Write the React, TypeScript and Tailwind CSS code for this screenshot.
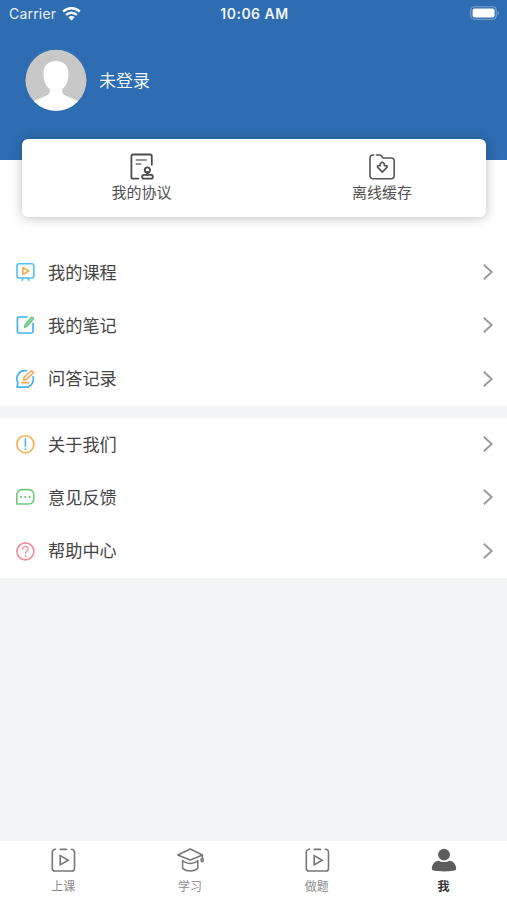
import type { ReactNode } from 'react';

type Item = { label: string; icon: ReactNode };

const CourseIcon = () => (
    <svg width="20" height="20" viewBox="0 0 20 20" fill="none" strokeWidth="1.6" strokeLinecap="round" strokeLinejoin="round">
        <rect x="2" y="1.8" width="16.8" height="14.2" rx="2.2" stroke="#56bdf0" />
        <path d="M8 16.2l-.8 2M13 16.2l.8 2" stroke="#56bdf0" />
        <path d="M7.9 5.6v6.8l5.9-3.4Z" stroke="#f5a94a" />
    </svg>
);

const NoteIcon = () => (
    <svg width="20" height="20" viewBox="0 0 20 20" fill="none" strokeLinecap="round" strokeLinejoin="round">
        <path d="M12.4 2H4a1.6 1.6 0 0 0-1.6 1.6v12.8A1.6 1.6 0 0 0 4 18h12.4a1.6 1.6 0 0 0 1.6-1.6V8.4" stroke="#40b4ec" strokeWidth="1.7" />
        <path d="m9.4 12.6.6-2.8 6.3-7.4q1.800-.4 2.200 1.400l-6.500 7.400Z" stroke="#68c781" strokeWidth="1.4" fill="#9bdca9" />
    </svg>
);

const AnswerIcon = () => (
    <svg width="20" height="20" viewBox="0 0 20 20" fill="none" strokeLinecap="round" strokeLinejoin="round">
        <path d="M11.6 1.9A8 8 0 0 0 3 13.8L2 18.2h8.5A8 8 0 0 0 18 7.8" stroke="#45b5ef" strokeWidth="1.7" />
        <path d="m8.6 10.900.8-2.900 7-6.300 2.200 1.800-7 6.700Z" stroke="#f3a44b" strokeWidth="1.5" />
        <path d="M6.8 13.6h7" stroke="#f3a44b" strokeWidth="1.6" />
    </svg>
);

const AboutIcon = () => (
    <svg width="20" height="20" viewBox="0 0 20 20" fill="none" strokeLinecap="round">
        <circle cx="10.4" cy="10.2" r="8.5" stroke="#f4ae50" strokeWidth="1.6" />
        <path d="M10.4 5v7.4" stroke="#45b5ef" strokeWidth="1.5" />
        <circle cx="10.4" cy="15.2" r=".9" fill="#45b5ef" />
    </svg>
);

const FeedbackIcon = () => (
    <svg width="20" height="20" viewBox="0 0 20 20" fill="none">
        <path d="M1.8 17V7.6a5 5 0 0 1 5-5h7a5 5 0 0 1 5 5V12a5 5 0 0 1-5 5Z" stroke="#6fca7d" strokeWidth="1.6" strokeLinejoin="round" />
        <g fill="#6fca7d">
            <circle cx="6" cy="9.9" r="1.1" />
            <circle cx="10.3" cy="9.9" r="1.1" />
            <circle cx="14.6" cy="9.9" r="1.1" />
        </g>
    </svg>
);

const HelpIcon = () => (
    <svg width="20" height="20" viewBox="0 0 20 20" fill="none" stroke="#f28ba2" strokeLinecap="round" strokeLinejoin="round">
        <circle cx="10.4" cy="10.4" r="8.5" strokeWidth="1.6" />
        <path d="M7.7 8.2A2.7 2.7 0 1 1 12 10.2C10.9 11 10.4 11.4 10.4 12.5" strokeWidth="1.3" />
        <circle cx="10.4" cy="15" r=".4" fill="#f28ba2" strokeWidth="1" />
    </svg>
);

const AgreementIcon = () => (
    <svg width="26" height="28" viewBox="0 0 26 28" fill="none" stroke="#4c4c4c" strokeWidth="1.8" strokeLinecap="round" strokeLinejoin="round">
        <path d="M9.4 25.600H4.100A1.700 1.700 0 0 1 2.400 23.900V3.200A1.700 1.700 0 0 1 4.100 1.500h17a1.700 1.700 0 0 1 1.700 1.700v8.600" />
        <path d="M7.200 7h10.200M7.200 11h4.600" strokeWidth="1.300" stroke="#777" />
        <circle cx="18.400" cy="16.900" r="2.600" />
        <path d="M18.400 19.500v2.100" strokeWidth="2.300" />
        <rect x="13.200" y="21.800" width="10.600" height="3.800" rx="1.700" />
    </svg>
);

const CacheIcon = () => (
    <svg width="28" height="28" viewBox="0 0 28 28" fill="none" stroke="#555" strokeWidth="1.6" strokeLinecap="round" strokeLinejoin="round">
        <path d="M8.5 2h3.200a2 2 0 0 1 1.600.8L15 5h8.200a3 3 0 0 1 3 3v14.700a3 3 0 0 1-3 3H5a3 3 0 0 1-3-3V5a3 3 0 0 1 3-3h.700" />
        <path d="M12.300 12.800v-2.200l2-1.500 2 1.500v2.200h2.800v1.300l-4.800 5-4.800-5v-1.300Z" />
    </svg>
);

const PlayTabIcon = () => (
    <svg width="26" height="26" viewBox="0 0 26 26" fill="none" stroke="#777" strokeWidth="1.6" strokeLinecap="round" strokeLinejoin="round">
        <path d="M5.4 2.200A3 3 0 0 0 2.300 5.200v16.200a2.600 2.600 0 0 0 2.600 2.600h17a2.600 2.600 0 0 0 2.600-2.600V5.200a3 3 0 0 0-3.100-3M10.300 2.400h6.200" />
        <path d="M10.200 8.600v9.300l7.900-4.600Z" strokeLinejoin="miter" />
    </svg>
);

const StudyTabIcon = () => (
    <svg width="28" height="26" viewBox="0 0 28 26" fill="none" stroke="#777" strokeWidth="1.5" strokeLinecap="round" strokeLinejoin="round">
        <path d="M14.2 2 1.800 8l12.400 5 12.400-5Z" />
        <path d="M6.600 13.400v7.900c1.800 1.900 4.400 2.700 7.600 2.700s5.800-.8 7.600-2.700v-7.900" />
        <path d="M6.600 14.200c2.300.4 3 2.200 7.600 2.200s5.300-1.800 7.600-2.200M26.300 8.400v3.400M25 12h2.300l-.4 2.600h-1.500Z" />
    </svg>
);

const MeTabIcon = () => (
    <svg width="26" height="26" viewBox="0 0 26 26" fill="#5d5d5d">
        <circle cx="13" cy="7.600" r="5.900" />
        <path d="M.8 22c0-5 3.300-8.300 7.200-8.300 1.500 1 3.100 1.400 5 1.400s3.500-.4 5-1.400c3.900 0 7.200 3.300 7.200 8.300 0 1.800-5 2.400-12.200 2.400S.8 23.800.8 22Z" />
    </svg>
);

const learningItems: Item[] = [
    { label: '我的课程', icon: <CourseIcon /> },
    { label: '我的笔记', icon: <NoteIcon /> },
    { label: '问答记录', icon: <AnswerIcon /> },
];

const supportItems: Item[] = [
    { label: '关于我们', icon: <AboutIcon /> },
    { label: '意见反馈', icon: <FeedbackIcon /> },
    { label: '帮助中心', icon: <HelpIcon /> },
];

const tabs: Item[] = [
    { label: '上课', icon: <PlayTabIcon /> },
    { label: '学习', icon: <StudyTabIcon /> },
    { label: '做题', icon: <PlayTabIcon /> },
    { label: '我', icon: <MeTabIcon /> },
];

function StatusBar() {
    return (
        <div className="grid h-7 grid-cols-3 items-center pl-[9px] pr-[7px] font-['Inter','Noto_Sans_CJK_SC',sans-serif] text-[14px] leading-none">
            <div className="flex items-center gap-[6px] text-white/90">
                <span className="tracking-[0.2px]">Carrier</span>
                <svg width="19" height="14" viewBox="0 0 19 14" fill="none" stroke="#fff" strokeWidth="2.4">
                    <path d="M1.2 4.700a11.800 11.800 0 0 1 16.600 0M4.100 8a7.600 7.600 0 0 1 10.800 0" />
                    <path d="M6.400 10.200a4.400 4.400 0 0 1 6.200 0L9.500 13.400Z" fill="#fff" stroke="none" />
                </svg>
            </div>
            <span className="whitespace-nowrap text-center font-semibold tracking-[0.5px] text-white/95">10:06 AM</span>
            <svg className="-mt-0.5 justify-self-end" width="30" height="14" viewBox="0 0 30 14" fill="none">
                <rect x=".8" y=".8" width="25.4" height="12.4" rx="3.5" stroke="#7ba3d0" strokeWidth="1.1" />
                <rect x="2.6" y="2.4" width="22" height="9.2" rx="2" fill="#fff" />
                <path d="M27.600 4.800v4.400c1.700-.8 1.700-3.600 0-4.400Z" fill="#7ba3d0" />
            </svg>
        </div>
    );
}

function MenuGroup({ items }: { items: Item[] }) {
    return (
        <div className="grid h-40 grid-rows-3 bg-white">
            {items.map((item) => (
                <button key={item.label} className="flex items-center pl-[15px] pr-[13px] text-left">
                    {item.icon}
                    <span className="ml-[13px] flex-1 pb-px text-[17.2px] leading-6 text-[#444]">{item.label}</span>
                    <svg width="12" height="18" viewBox="0 0 12 18" fill="none" stroke="#999" strokeWidth="1.9">
                        <path d="m1.800 1.700 7.900 7.300-7.900 7.300" />
                    </svg>
                </button>
            ))}
        </div>
    );
}

export default function App() {
    return (
        <div className="flex h-[900px] w-[507px] flex-col overflow-hidden bg-[#f3f4f6] font-['Noto_Sans_CJK_SC',sans-serif]">
            <header className="h-[159.5px] shrink-0 bg-[#2e6db1]">
                <StatusBar />
                <div className="mt-[21px] flex items-center gap-3 pl-[25px]">
                    <svg width="62" height="62" viewBox="0 0 62 62">
                        <defs>
                            <clipPath id="avatar">
                                <circle cx="31" cy="31.3" r="30.5" />
                            </clipPath>
                        </defs>
                        <g clipPath="url(#avatar)">
                            <path fill="#c8c8c8" d="M0 0h62v62H0z" />
                            <path fill="#fff" d="M31 12c-8.200 0-12.500 5-12.500 12.500 0 7.500 2.300 12.500 6 15.500 1 2.600.5 4.500-2 6C18 48.500 13 49.700 8 52.500V62h46v-9.500c-5-2.800-10-4-14.500-6.500-2.500-1.500-3-3.400-2-6 3.700-3 6-8 6-15.500C43.500 17 39.200 12 31 12Z" />
                        </g>
                    </svg>
                    <span className="text-[17px] leading-6 text-white/95">未登录</span>
                </div>
            </header>

            <div className="h-[86px] shrink-0 bg-white pl-[22px] pr-[21px]">
                <div className="relative -mt-[20.5px] flex h-[78px] rounded-[6px] bg-white text-[15px] leading-5 text-[#505050] shadow-[0_1px_12px_rgba(0,0,0,0.25)]">
                    <button className="flex w-[239px] flex-col items-center pt-[14px]">
                        <AgreementIcon />
                        <span className="mt-px">我的协议</span>
                    </button>
                    <button className="flex flex-1 flex-col items-center pl-[17px] pt-[14px]">
                        <CacheIcon />
                        <span className="mt-px">离线缓存</span>
                    </button>
                </div>
            </div>

            <main className="flex flex-1 flex-col gap-3">
                <MenuGroup items={learningItems} />
                <MenuGroup items={supportItems} />
            </main>

            <nav className="grid h-[59px] shrink-0 grid-cols-4 bg-white">
                {tabs.map((tab) => (
                    <button key={tab.label} className="flex flex-col items-center pt-[6px] text-[12px] leading-4 text-[#8c8c8c] last:font-bold last:text-[#333]">
                        {tab.icon}
                        <span className="mt-[5px]">{tab.label}</span>
                    </button>
                ))}
            </nav>
        </div>
    );
}
